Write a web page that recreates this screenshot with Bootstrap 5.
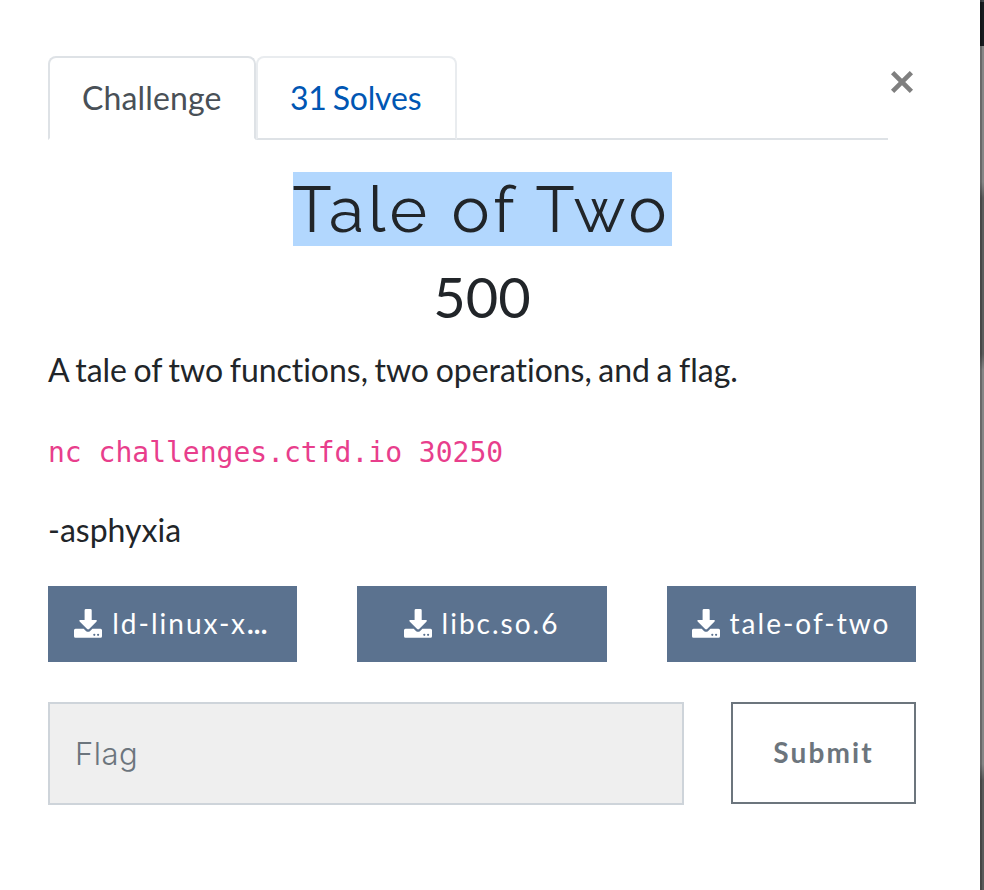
<!DOCTYPE html>
<html lang="en">
<head>
<meta charset="utf-8">
<meta name="viewport" content="width=device-width, initial-scale=1">
<title>Tale of Two</title>
<link href="https://cdn.jsdelivr.net/npm/bootstrap@5.3.0/dist/css/bootstrap.min.css" rel="stylesheet">
<style>
  html { overflow: hidden; }
  body { font: 400 32px/48px Lato, sans-serif; color: #212529; height: 890px; overflow: hidden; background: #fff; }
  .challenge { padding: 56px 64px 0 48px; }
  .backdrop-edge { width: 4px; background:
    linear-gradient(90deg, rgba(0,0,0,.22) 50%, transparent 50%),
    linear-gradient(#42484c 0 2px, #171b1f 2px 46px, #868686 46px 182px, #5c5c5c 198px, #5c5c5c 354px, #868686 370px, #868686 764px, #5a5a5a 780px); }
  .nav-tabs { border-bottom: 2px solid #dee2e6; margin-right: 28px; height: 84px; }
  .nav-tabs .nav-link { border-width: 2px; border-radius: 8px 8px 0 0; padding: 16px 0 16px 32px; margin-bottom: -2px; width: 208px; height: 84px; color: #0056b3; white-space: nowrap; letter-spacing: .15px; }
  .nav-tabs .nav-link.solves { width: 201px; word-spacing: -2px; letter-spacing: -.2px; padding-left: 32px; border-color: #e9ecef #e9ecef #dee2e6; }
  .nav-tabs .nav-link.active { color: #495057; border-color: #dee2e6 #dee2e6 #fff; }
  .dismiss { top: 69px; left: 889px; width: 26px; height: 26px; }
  .title { font: 400 64px/74px Raleway, Lato, sans-serif; letter-spacing: 4.1px; margin-top: 32px; }
  .title span { display: block; width: 379px; height: 74px; padding-top: 1px; background: #b2d7fe; white-space: nowrap; }
  .points { font-size: 56px; line-height: 67px; margin: 17px 0 16px; }
  .desc p { margin-bottom: 32px; }
  .desc .prompt { word-spacing: -1.5px; font-variant-ligatures: no-common-ligatures; letter-spacing: -.03px; }
  .desc code { font: 28px/48px "DejaVu Sans Mono", monospace; color: #e83e8c; display: block; padding-top: 3px; height: 48px; }
  .files { display: grid; grid-template-columns: 249px 250px 249px; column-gap: 60px; }
  .files .btn { height: 76px; border: 0; background: #5b728f; color: #fff; font-size: 28px; line-height: 42px; letter-spacing: 2px; padding: 0 1px 2px 0; white-space: nowrap; gap: 10px; }
  .files .btn:first-child { padding-right: 3px; }
  .files .btn .dots { font-weight: 700; letter-spacing: .3px; }
  .files svg { width: 28px; height: 29px; }
  .entry { margin-top: 40px; gap: 47px; }
  .entry .form-control { width: 636px; height: 103px; background: #efefef; border: 2px solid #ced4da; padding: 0 26px 0 25px; font: 300 31px Avenir, Inter, sans-serif; letter-spacing: .5px; }
  .entry .form-control::placeholder { color: #6c757d; opacity: 1; }
  .entry .btn { width: 185px; height: 102px; border: 2px solid #6c757d; color: #6c757d; font-weight: 700; font-size: 28px; letter-spacing: 2.1px; padding: 0 0 2px; }
</style>
</head>
<body class="d-flex">
<svg class="d-none" xmlns="http://www.w3.org/2000/svg">
  <symbol id="download" viewBox="0 0 28 29">
    <path fill="#fff" d="M12 0h4.400q1.300 0 1.300 1.300v9.800h4.100q1.800 0 .8 1.300l-7.500 7.700q-1 .9-2 0l-7.500-7.700q-1-1.300.8-1.300h4.200V1.300Q10.600 0 12 0Z"/>
    <path fill="#fff" fill-rule="evenodd" d="M1.500 19.700h8.200l2.200 2.200q2.200 1.900 4.300 0l2.200-2.200h8.100q1.500 0 1.500 1.500v6q0 1.500-1.500 1.500h-25Q0 28.700 0 27.200v-6q0-1.500 1.500-1.500ZM20.300 24.700a1.100 1.100 0 1 0 0 2.200a1.100 1.100 0 1 0 0-2.200ZM24.100 24.700a1.100 1.100 0 1 0 0 2.200a1.100 1.100 0 1 0 0-2.200Z"/>
  </symbol>
</svg>
<main class="challenge flex-grow-1 position-relative">
  <ul class="nav nav-tabs flex-nowrap">
    <li class="nav-item"><a class="nav-link active" href="#">Challenge</a></li>
    <li class="nav-item"><a class="nav-link solves" href="#">31 Solves</a></li>
  </ul>
  <button class="dismiss position-absolute btn p-0 border-0 d-flex" aria-label="Close">
    <svg width="26" height="26" viewBox="0 0 26 26"><path d="M3.600 3.600 22.400 22.400M22.400 3.600 3.600 22.400" stroke="#7f7f7f" stroke-width="4.600" fill="none"/></svg>
  </button>
  <h2 class="title d-flex justify-content-center mb-0"><span>Tale of Two</span></h2>
  <h3 class="points text-center fw-normal">500</h3>
  <div class="desc">
    <p class="prompt">A tale of two functions, two operations, and a flag.</p>
    <p><code>nc challenges.ctfd.io 30250</code></p>
    <p>-asphyxia</p>
  </div>
  <div class="files">
    <a class="btn rounded-0 d-flex align-items-center justify-content-center" href="#"><svg><use href="#download"/></svg><span>ld-linux-x<span class="dots">...</span></span></a>
    <a class="btn rounded-0 d-flex align-items-center justify-content-center" href="#"><svg><use href="#download"/></svg><span>libc.so.6</span></a>
    <a class="btn rounded-0 d-flex align-items-center justify-content-center" href="#"><svg><use href="#download"/></svg><span>tale-of-two</span></a>
  </div>
  <form class="entry d-flex align-items-start">
    <input class="form-control rounded-0 flex-shrink-0" type="text" placeholder="Flag">
    <button class="btn rounded-0 flex-shrink-0" type="button">Submit</button>
  </form>
</main>
<div class="backdrop-edge flex-shrink-0"></div>
<script src="https://cdn.jsdelivr.net/npm/bootstrap@5.3.0/dist/js/bootstrap.bundle.min.js"></script>
</body>
</html>
